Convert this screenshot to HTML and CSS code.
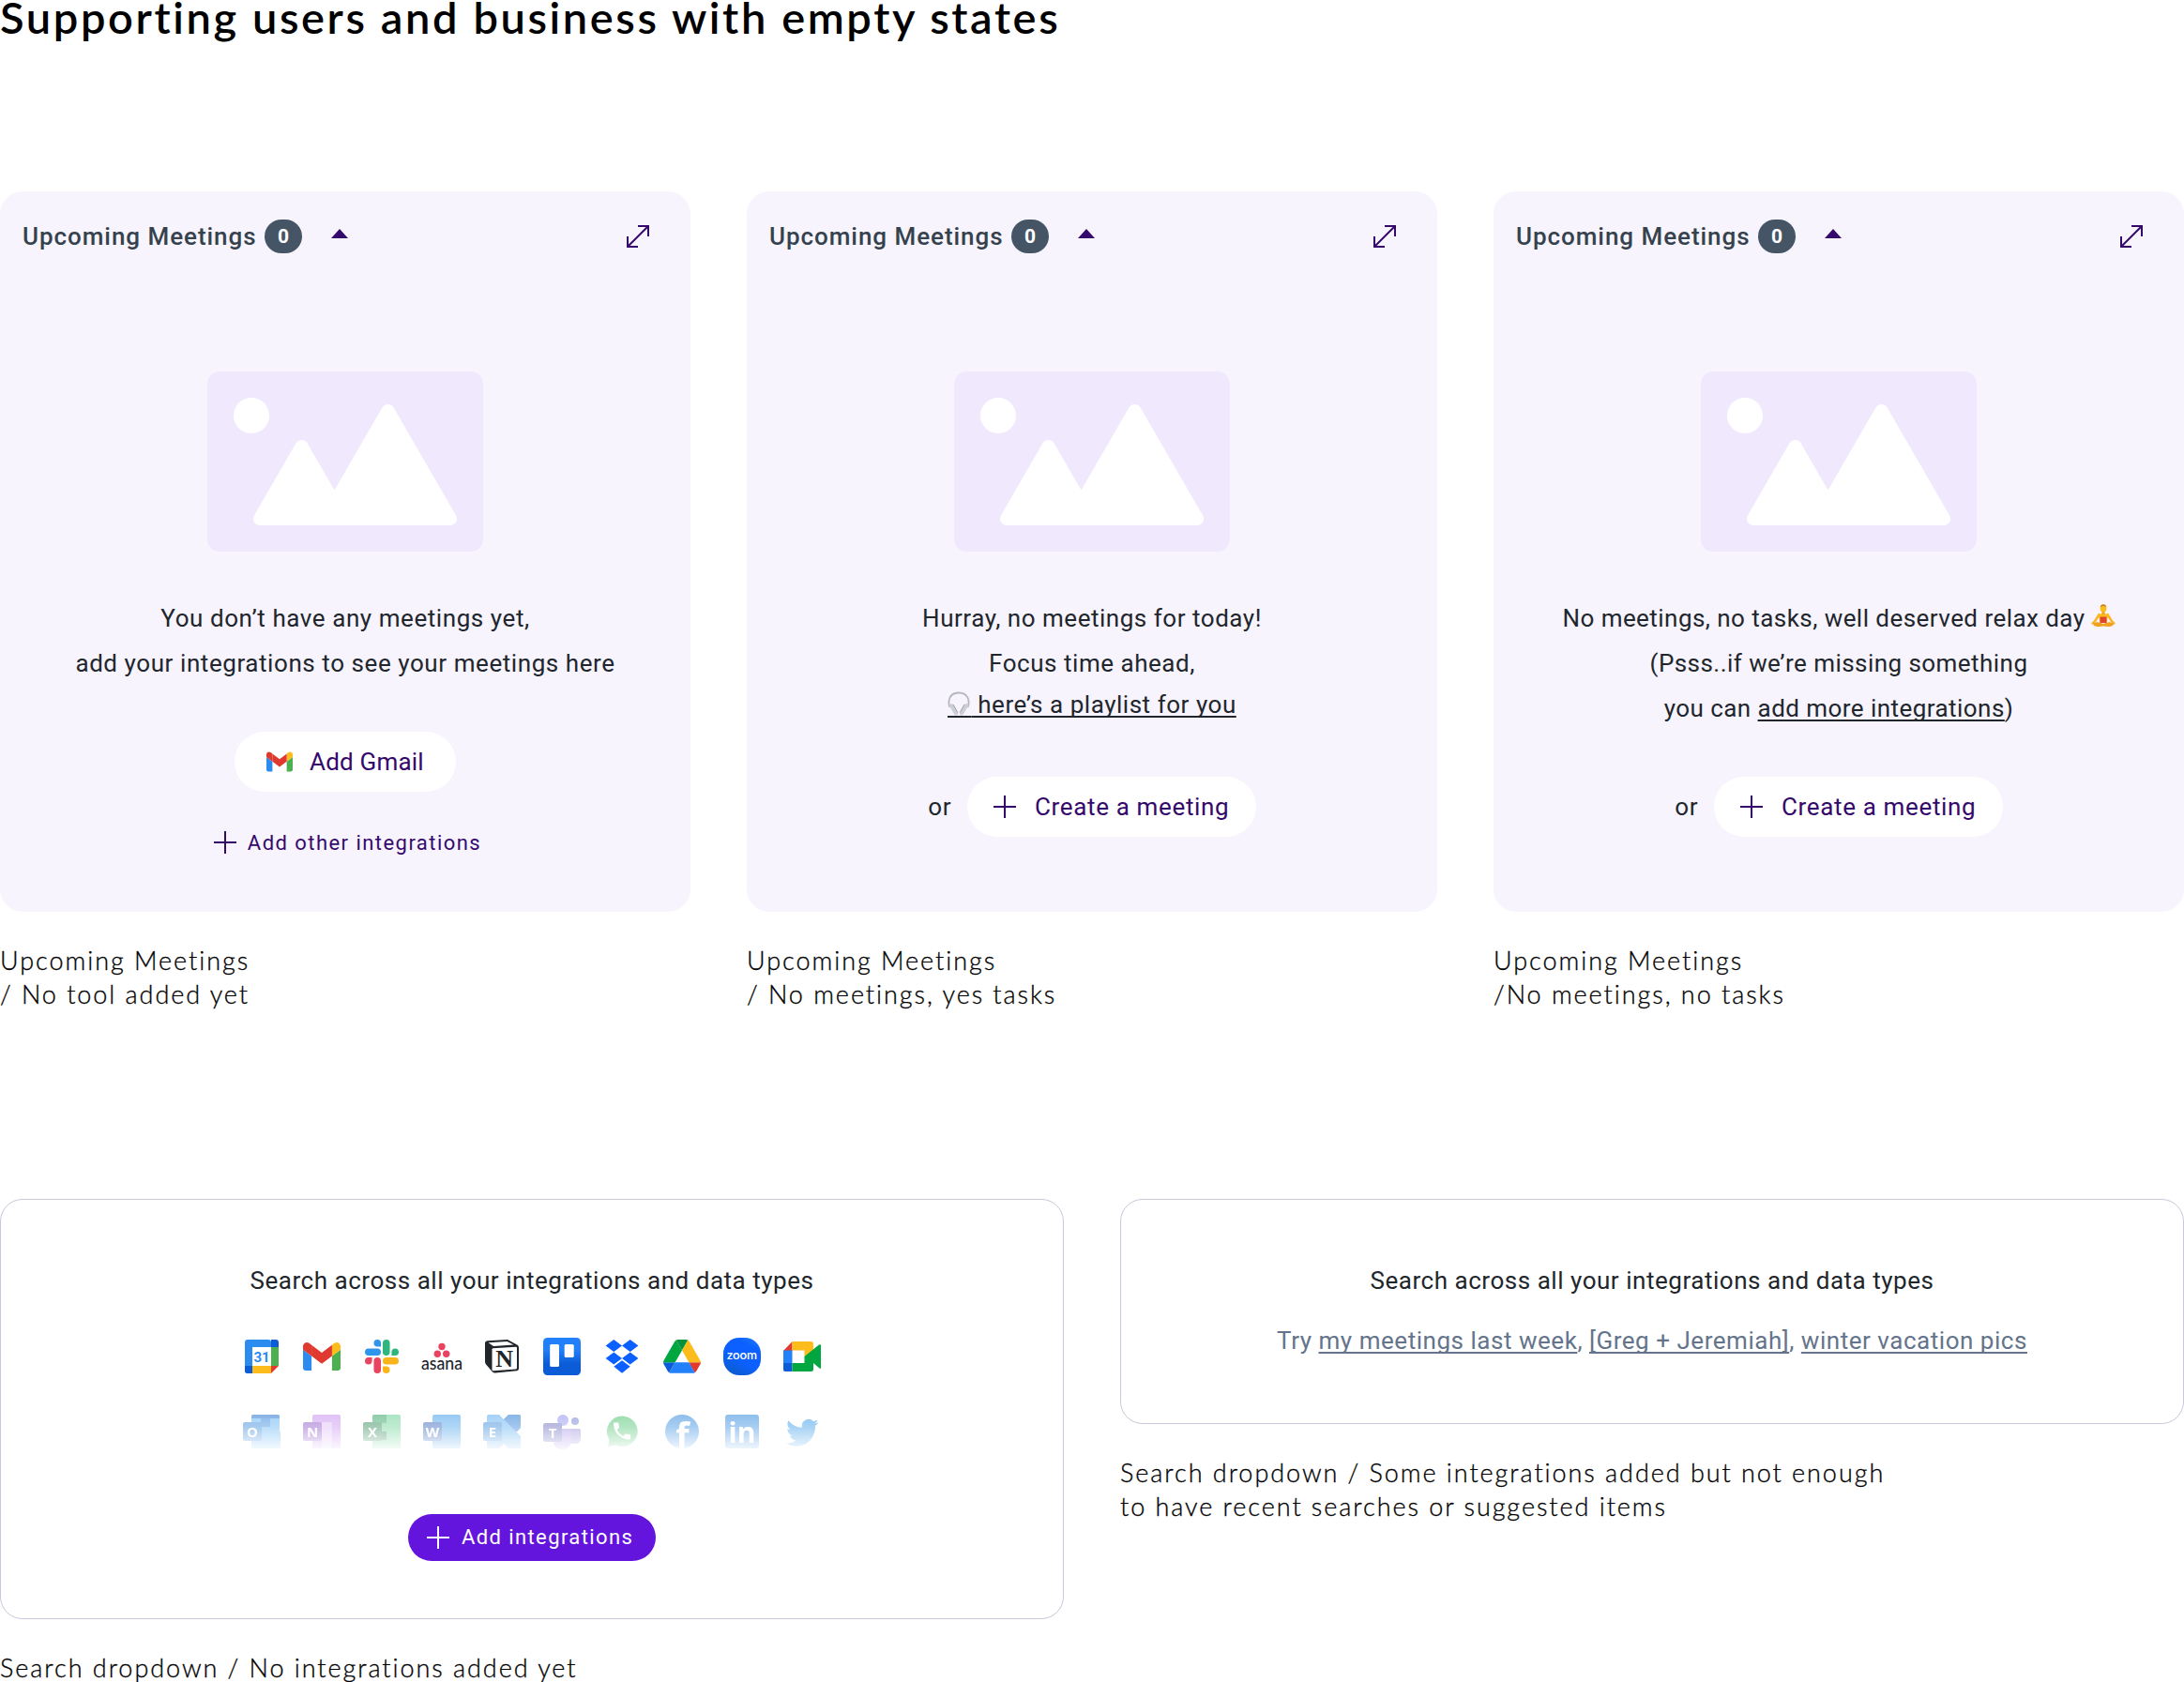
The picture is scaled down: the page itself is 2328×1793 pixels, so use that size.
FILE: index.html
```html
<!DOCTYPE html>
<html lang="en">
<head>
    <meta charset="UTF-8">
    <title>Empty states</title>
    <link rel="stylesheet" href="styles.css">
</head>
<body>
<!-- shared icons -->
<svg class="defs" width="0" height="0">
    <symbol id="expand" viewBox="0 0 24 24">
        <path d="M1 23L23 1M12 1h11v11M1 12v11h11" fill="none" stroke="#35096b" stroke-width="2"/>
    </symbol>
    <symbol id="plus" viewBox="0 0 24 24">
        <path d="M12 0v24M0 12h24" fill="none" stroke="currentColor" stroke-width="2"/>
    </symbol>
    <symbol id="picture" viewBox="0 0 294 192">
        <rect width="294" height="192" rx="13" fill="#f0e9fd"/>
        <circle cx="47" cy="47" r="19" fill="#fff"/>
        <path d="M56 157L100.500 80L135.500 140.500L192.500 42L259 157Z" fill="#fff" stroke="#fff" stroke-width="14" stroke-linejoin="round"/>
    </symbol>
    <symbol id="gmail" viewBox="52 42 88 66">
        <path fill="#2b8bee" d="M58 108h14V74L52 59v43c0 3.320 2.690 6 6 6"/>
        <path fill="#4caf50" d="M120 108h14c3.320 0 6-2.690 6-6V59l-20 15"/>
        <path fill="#fbbc1c" d="M120 48v26l20-15v-8c0-7.420-8.470-11.650-14.400-7.200"/>
        <path fill="#e03a30" d="M72 74V48l24 18 24-18v26L96 92"/>
        <path fill="#e03a30" d="M52 51v8l20 15V48l-5.600-4.200c-5.940-4.450-14.400-.220-14.400 7.200"/>
    </symbol>
    <linearGradient id="trelloFill" x1="0" y1="0" x2="0" y2="1">
        <stop offset="0.300" stop-color="#2380fb"/>
        <stop offset="0.700" stop-color="#0b5cd6"/>
    </linearGradient>
    <linearGradient id="zoomFill" x1="1" y1="0" x2="0.500" y2="1">
        <stop offset="0" stop-color="#2380fb"/>
        <stop offset="0.300" stop-color="#0b60ff"/>
        <stop offset="0.700" stop-color="#0b60ff"/>
        <stop offset="1" stop-color="#0b5cd6"/>
    </linearGradient>
</svg>

<h1 class="title">Supporting users and business with empty states</h1>

<div class="meetings">
    <div class="column">
        <div class="card">
            <div class="card-head">
                <span class="card-title">Upcoming Meetings</span>
                <span class="badge">0</span>
                <span class="arrow"></span>
                <svg class="expand"><use href="#expand"/></svg>
            </div>
            <svg class="picture"><use href="#picture"/></svg>
            <div class="message short">
                <p>You don’t have any meetings yet,</p>
                <p>add your integrations to see your meetings here</p>
            </div>
            <div class="pill gmail-pill">
                <svg class="gmail-icon"><use href="#gmail"/></svg>
                <span>Add Gmail</span>
            </div>
            <div class="other">
                <svg class="plus"><use href="#plus"/></svg>
                <span>Add other integrations</span>
            </div>
        </div>
        <p class="caption">Upcoming Meetings<br>/ No tool added yet</p>
    </div>

    <div class="column">
        <div class="card">
            <div class="card-head">
                <span class="card-title">Upcoming Meetings</span>
                <span class="badge">0</span>
                <span class="arrow"></span>
                <svg class="expand"><use href="#expand"/></svg>
            </div>
            <svg class="picture"><use href="#picture"/></svg>
            <div class="message">
                <p>Hurray, no meetings for today!</p>
                <p>Focus time ahead,</p>
                <p class="playlist"><a class="link"><svg class="headphones" viewBox="0 0 24 26">
                    <path d="M2.500 17C0 11 1.500 1.500 12 1.500S24 11 21.500 17" fill="none" stroke="#b4b7c0" stroke-width="1.800"/>
                    <path d="M4 15L9 23.500M20 15L15 23.500" fill="none" stroke="#cdcfd6" stroke-width="4" stroke-linecap="round"/>
                    <path d="M6 14L10.800 22.500M18 14L13.200 22.500" fill="none" stroke="#9a9da8" stroke-width="1"/>
                    <path d="M0 27h25" fill="none" stroke="#21262c" stroke-width="2"/>
                </svg> here’s a playlist for you</a></p>
            </div>
            <div class="actions">
                <span class="or">or</span>
                <div class="pill create-pill">
                    <svg class="plus"><use href="#plus"/></svg>
                    <span>Create a meeting</span>
                </div>
            </div>
        </div>
        <p class="caption">Upcoming Meetings<br>/ No meetings, yes tasks</p>
    </div>

    <div class="column">
        <div class="card">
            <div class="card-head">
                <span class="card-title">Upcoming Meetings</span>
                <span class="badge">0</span>
                <span class="arrow"></span>
                <svg class="expand"><use href="#expand"/></svg>
            </div>
            <svg class="picture"><use href="#picture"/></svg>
            <div class="message relax">
                <p>No meetings, no tasks, well deserved relax day<svg class="yoga" viewBox="0 0 26 25">
                    <path d="M8.500 11L4.500 17.500L1.500 20.500M17.500 11L21.500 17.500L24.500 20.500" fill="none" stroke="#f9b41e" stroke-width="2.400" stroke-linecap="round"/>
                    <path d="M2 20.500C7 18 10 20 13 21C16 20 19 18 24 20.500C24 24 19 24.500 13 23.500C7 24.500 2 24 2 20.500Z" fill="#f2a01f"/>
                    <path d="M8 11.500C9.500 9.500 16.500 9.500 18 11.500L17 19H9Z" fill="#fbbc1c"/>
                    <path d="M9.500 13.500h7v6.500h-7z" fill="#e0452f"/>
                    <rect x="11.500" y="6" width="3" height="5" fill="#f2a01f"/>
                    <ellipse cx="13" cy="4.500" rx="3.300" ry="4.300" fill="#fbbc1c"/>
                    <path d="M9.700 3.500C9.800-.700 16.200-.700 16.300 3.500C15 1.800 11 1.800 9.700 3.500Z" fill="#c98424"/>
                </svg></p>
                <p>(Psss..if we’re missing something</p>
                <p>you can <a class="link">add more integrations</a>)</p>
            </div>
            <div class="actions">
                <span class="or">or</span>
                <div class="pill create-pill">
                    <svg class="plus"><use href="#plus"/></svg>
                    <span>Create a meeting</span>
                </div>
            </div>
        </div>
        <p class="caption">Upcoming Meetings<br>/No meetings, no tasks</p>
    </div>
</div>

<div class="search">
    <div class="column">
        <div class="box tall">
            <p class="box-title">Search across all your integrations and data types</p>
            <div class="icons">
                <!-- calendar -->
                <svg viewBox="0 0 40 40">
                    <rect x="2" y="2" width="28" height="36" rx="3" fill="#2b8bee"/>
                    <path d="M30 2h5a3 3 0 0 1 3 3v5h-8zM2 30h8v8H5a3 3 0 0 1-3-3z" fill="#0b5cd6"/>
                    <path d="M30 10h8v20h-8z" fill="#4caf50"/>
                    <path d="M10 30h20v8H10z" fill="#fbbc1c"/>
                    <path d="M30 30h8l-8 8z" fill="#e03a30"/>
                    <path d="M10 10h20v20H10z" fill="#fff"/>
                    <text x="20" y="25.500" class="t-31">31</text>
                </svg>
                <!-- gmail -->
                <svg viewBox="0 0 40 40"><use href="#gmail" x="0" y="4" width="40" height="32"/></svg>
                <!-- slack -->
                <svg viewBox="0 0 40 40">
                    <g transform="translate(2 2) scale(1.500)">
                        <path fill="#e8435f" d="M5.042 15.165a2.528 2.528 0 0 1-2.520 2.523A2.528 2.528 0 0 1 0 15.165a2.527 2.527 0 0 1 2.522-2.520h2.520v2.520zM6.313 15.165a2.527 2.527 0 0 1 2.521-2.520 2.527 2.527 0 0 1 2.521 2.520v6.313A2.528 2.528 0 0 1 8.834 24a2.528 2.528 0 0 1-2.521-2.522v-6.313z"/>
                        <path fill="#2f95ea" d="M8.834 5.042a2.528 2.528 0 0 1-2.521-2.520A2.528 2.528 0 0 1 8.834 0a2.528 2.528 0 0 1 2.521 2.522v2.520H8.834zM8.834 6.313a2.528 2.528 0 0 1 2.521 2.521 2.528 2.528 0 0 1-2.521 2.521H2.522A2.528 2.528 0 0 1 0 8.834a2.528 2.528 0 0 1 2.522-2.521h6.312z"/>
                        <path fill="#2fb67c" d="M18.956 8.834a2.528 2.528 0 0 1 2.522-2.521A2.528 2.528 0 0 1 24 8.834a2.528 2.528 0 0 1-2.522 2.521h-2.522V8.834zM17.688 8.834a2.528 2.528 0 0 1-2.523 2.521 2.527 2.527 0 0 1-2.520-2.521V2.522A2.527 2.527 0 0 1 15.165 0a2.528 2.528 0 0 1 2.523 2.522v6.312z"/>
                        <path fill="#fbb51c" d="M15.165 18.956a2.528 2.528 0 0 1 2.523 2.522A2.528 2.528 0 0 1 15.165 24a2.527 2.527 0 0 1-2.520-2.522v-2.522h2.520zM15.165 17.688a2.527 2.527 0 0 1-2.520-2.523 2.526 2.526 0 0 1 2.520-2.520h6.313A2.527 2.527 0 0 1 24 15.165a2.528 2.528 0 0 1-2.522 2.523h-6.313z"/>
                    </g>
                </svg>
                <!-- asana -->
                <svg viewBox="0 0 40 40">
                    <circle cx="20" cy="9.500" r="3.700" fill="#e8435f"/>
                    <circle cx="15.300" cy="17.300" r="3.700" fill="#e8435f"/>
                    <circle cx="24.700" cy="17.300" r="3.700" fill="#e8435f"/>
                    <text x="-2" y="33.700" class="t-asana" textLength="44" lengthAdjust="spacingAndGlyphs">asana</text>
                </svg>
                <!-- notion -->
                <svg viewBox="0 0 40 40">
                    <path d="M2 5.500Q2 3.500 4.500 3.300L26 2L37 8Q38 9 38 11V33Q38 35 36 35.300L13 37.500Q11 37.700 10 36.500L3.500 29Q2 27.500 2 25.500Z" fill="#21262c"/>
                    <path d="M5.500 5.300L25.500 4L32.500 7.600L11 9Z" fill="#fff"/>
                    <path d="M9.500 12.500Q9.500 11.300 11 11.200L35 9.700Q36 9.700 36 11V32Q36 33.300 35 33.500L11 35.200Q9.500 35.300 9.500 34Z" fill="#fff"/>
                    <text x="22.700" y="31.300" class="t-notion">N</text>
                </svg>
                <!-- trello -->
                <svg viewBox="0 0 40 40">
                    <rect width="40" height="40" rx="4.500" fill="url(#trelloFill)"/>
                    <rect x="7.200" y="7" width="9.800" height="24" rx="1.500" fill="#fff"/>
                    <rect x="22.700" y="7" width="10" height="14" rx="1.500" fill="#fff"/>
                </svg>
                <!-- dropbox -->
                <svg viewBox="0 0 40 40">
                    <path fill="#0b60ff" d="M11.300 2l8.700 6.500-8.700 6.500-8.700-6.500zM28.700 2l8.700 6.500-8.700 6.500-8.700-6.500zM11.300 15.500l8.700 6.500-8.700 6.500-8.700-6.500zM28.700 15.500l8.700 6.500-8.700 6.500-8.700-6.500zM20 24.200l8.700 6.500-8.700 7-8.700-7z"/>
                </svg>
                <!-- drive -->
                <svg viewBox="0 0 40 40">
                    <g transform="translate(0 2) scale(0.458)">
                        <path fill="#0b5cd6" d="m6.600 66.850 3.850 6.650c.800 1.400 1.950 2.500 3.300 3.300l13.750-23.800h-27.500c0 1.550.400 3.100 1.200 4.500z"/>
                        <path fill="#00a63f" d="m43.650 25-13.750-23.800c-1.350.800-2.500 1.900-3.300 3.300l-25.400 44a9.060 9.060 0 0 0 -1.200 4.500h27.500z"/>
                        <path fill="#e03a30" d="m73.550 76.800c1.350-.800 2.500-1.900 3.300-3.300l1.600-2.750 7.650-13.250c.800-1.400 1.200-2.950 1.200-4.500h-27.502l5.852 11.500z"/>
                        <path fill="#05923a" d="m43.650 25 13.750-23.800c-1.350-.800-2.900-1.200-4.500-1.200h-18.500c-1.600 0-3.150.450-4.500 1.200z"/>
                        <path fill="#2380fb" d="m59.800 53h-32.300l-13.750 23.800c1.350.800 2.900 1.200 4.500 1.200h50.800c1.600 0 3.150-.450 4.500-1.200z"/>
                        <path fill="#fbbc1c" d="m73.400 26.500-12.700-22c-.800-1.400-1.950-2.500-3.300-3.300l-13.750 23.800 16.150 28h27.450c0-1.550-.400-3.100-1.200-4.500z"/>
                    </g>
                </svg>
                <!-- zoom -->
                <svg viewBox="0 0 40 40">
                    <rect width="40" height="40" rx="17" fill="url(#zoomFill)"/>
                    <text x="4" y="23.300" class="t-zoom" textLength="32" lengthAdjust="spacingAndGlyphs">zoom</text>
                </svg>
                <!-- meet -->
                <svg viewBox="0 0 40 40">
                    <path d="M0 14L9.500 4V14Z" fill="#e03a30"/>
                    <path d="M9.500 4H29.500Q32 4 32 6.500V20H22.500V13.500H9.500Z" fill="#fbbc1c"/>
                    <path d="M0 13.500H9.500V27H0Z" fill="#2380fb"/>
                    <path d="M0 27H9.500V36H2Q0 36 0 34Z" fill="#0b5cd6"/>
                    <path d="M9.500 27H22.500V20L38 7.500Q40 6.500 40 8.500V32Q40 33.500 38.500 32.500L32 27V33.500Q32 36 29.500 36H9.500Z" fill="#00a63f"/>
                </svg>
            </div>
            <div class="icons faded">
                <!-- outlook -->
                <svg viewBox="0 0 40 40">
                    <path d="M9 4Q9 2 11 2H37Q39 2 39 4V20L40 21V36Q40 38 38 38H11Q9 38 9 36Z" fill="#58aef2"/>
                    <path d="M9 4Q9 2 11 2H37Q39 2 39 4V6H9Z" fill="#1f6fce"/>
                    <path d="M19 6h10v9H19z" fill="#2a80d8"/>
                    <rect y="10" width="20" height="20" rx="2" fill="#2a80d8"/>
                    <text x="10" y="25.500" class="t-badge">O</text>
                </svg>
                <!-- onenote -->
                <svg viewBox="0 0 40 40">
                    <rect x="10" y="2" width="30" height="36" rx="2" fill="#c58bf0"/>
                    <path d="M20 10h11v28H20z" fill="#dbb8f6"/>
                    <rect y="10" width="20" height="20" rx="2" fill="#8446c4"/>
                    <text x="10" y="25.500" class="t-badge">N</text>
                </svg>
                <!-- excel -->
                <svg viewBox="0 0 40 40">
                    <rect x="10" y="2" width="30" height="36" rx="2" fill="#63cf8d"/>
                    <path d="M12 2H25V11H10V4Q10 2 12 2Z" fill="#2ba060"/>
                    <path d="M10 20h15v9H10z" fill="#1f7a48"/>
                    <rect y="10" width="20" height="20" rx="2" fill="#23804b"/>
                    <text x="10" y="25.500" class="t-badge">X</text>
                </svg>
                <!-- word -->
                <svg viewBox="0 0 40 40">
                    <rect x="10" y="2" width="30" height="36" rx="2" fill="#3c9be8"/>
                    <rect y="10" width="20" height="20" rx="2" fill="#2458b4"/>
                    <text x="10" y="25.500" class="t-badge">W</text>
                </svg>
                <!-- exchange -->
                <svg viewBox="0 0 40 40">
                    <path d="M4 4Q4 2 6 2H17L22 7L27 2H38Q40 2 40 4V16L35.500 20.500L40 25V36Q40 38 38 38H27L22 33L17 38H6Q4 38 4 36Z" fill="#56aaf0"/>
                    <path d="M22 7L27 2H38Q40 2 40 4V16L35.500 20.500Z" fill="#1f76d2"/>
                    <rect y="10" width="20" height="20" rx="2" fill="#2a80d8"/>
                    <text x="10" y="25.500" class="t-badge">E</text>
                </svg>
                <!-- teams -->
                <svg viewBox="0 0 40 40">
                    <circle cx="21" cy="8" r="6" fill="#8f8cf0"/>
                    <circle cx="34" cy="9" r="4" fill="#6a78cc"/>
                    <path d="M28 17H38.500Q40 17 40 18.500V27Q40 33 34 33H28Z" fill="#8a7fd6"/>
                    <path d="M11 17H30V28Q30 39 20.500 39Q11 39 11 30Z" fill="#9c84e6"/>
                    <rect y="11" width="20" height="20" rx="2" fill="#5b5fb8"/>
                    <text x="10" y="26.500" class="t-badge">T</text>
                </svg>
                <!-- whatsapp -->
                <svg viewBox="0 0 40 40">
                    <path d="M20.500 3.500A16.500 16.300 0 1 1 13 34.500L5 36.500L6.300 28.500A16.500 16.500 0 0 1 20.500 3.500Z" fill="#45bf67"/>
                    <path transform="translate(8 7.500)" d="M6.620 10.790c1.440 2.830 3.760 5.140 6.590 6.590l2.200-2.200c.270-.270.670-.360 1.020-.240 1.120.370 2.330.570 3.570.570.550 0 1 .450 1 1V20c0 .550-.450 1-1 1-9.390 0-17-7.610-17-17 0-.550.450-1 1-1h3.500c.550 0 1 .450 1 1 0 1.250.200 2.450.570 3.570.110.350.030.740-.250 1.020l-2.200 2.200z" fill="#fff"/>
                </svg>
                <!-- facebook -->
                <svg viewBox="0 0 40 40">
                    <circle cx="20" cy="20" r="18" fill="#2a86dd"/>
                    <text x="20.500" y="38" class="t-facebook">f</text>
                </svg>
                <!-- linkedin -->
                <svg viewBox="0 0 40 40">
                    <rect x="2" y="2" width="36" height="36" rx="3" fill="#2a86dd"/>
                    <text x="20" y="32" class="t-linkedin">in</text>
                </svg>
                <!-- twitter -->
                <svg viewBox="0 0 40 40">
                    <path transform="translate(3 3.500) scale(1.440 1.480)" fill="#2a93e6" d="M23.953 4.570a10 10 0 01-2.825.775 4.958 4.958 0 002.163-2.723c-.951.555-2.005.959-3.127 1.184a4.920 4.920 0 00-8.384 4.482C7.690 8.095 4.067 6.130 1.640 3.162a4.822 4.822 0 00-.666 2.475c0 1.710.870 3.213 2.188 4.096a4.904 4.904 0 01-2.228-.616v.060a4.923 4.923 0 003.946 4.827 4.996 4.996 0 01-2.212.085 4.936 4.936 0 004.604 3.417 9.867 9.867 0 01-6.102 2.105c-.390 0-.779-.023-1.170-.067a13.995 13.995 0 007.557 2.209c9.053 0 13.998-7.496 13.998-13.985 0-.210 0-.420-.015-.630A9.935 9.935 0 0024 4.590z"/>
                </svg>
            </div>
            <div class="add-btn">
                <svg class="plus"><use href="#plus"/></svg>
                <span>Add integrations</span>
            </div>
        </div>
        <p class="caption">Search dropdown / No integrations added yet</p>
    </div>

    <div class="column">
        <div class="box">
            <p class="box-title">Search across all your integrations and data types</p>
            <p class="try">Try <a class="link">my meetings last week</a>, <a class="link">[Greg + Jeremiah]</a>, <a class="link">winter vacation pics</a></p>
        </div>
        <p class="caption">Search dropdown / Some integrations added but not enough<br>to have recent searches or suggested items</p>
    </div>
</div>
</body>
</html>
```
FILE: styles.css
```css
* {
    padding: 0;
    margin: 0;
    box-sizing: border-box;
}

body {
    width: 2328px;
    height: 1793px;
    overflow: hidden;
    background: #fff;
    font-family: Roboto, sans-serif;
    font-size: 26px;
    letter-spacing: 0.53px;
    color: #21262c;
}

svg {
    display: block;
    overflow: visible;
}

.defs {
    position: absolute;
}

.title {
    font-family: Lato, sans-serif;
    font-size: 47px;
    font-weight: 600;
    line-height: 37px;
    letter-spacing: 2.6px;
    white-space: nowrap;
    color: #000;
}

/* meeting cards */
.meetings {
    display: grid;
    grid-template-columns: repeat(3, 736px);
    gap: 60px;
    margin-top: 167px;
}

.card {
    height: 768px;
    padding: 30px 24px 0;
    border-radius: 24px;
    background: #f7f4fe;
    display: flex;
    flex-direction: column;
    align-items: center;
}

.card-head {
    width: 100%;
    height: 36px;
    display: flex;
    align-items: center;
}

.card-title {
    width: 258px;
    font-weight: 500;
    letter-spacing: 0.95px;
    white-space: nowrap;
    color: #35424d;
}

.badge {
    width: 40px;
    height: 36px;
    border-radius: 18px;
    background: #455565;
    color: #fff;
    font-size: 21px;
    font-weight: 700;
    line-height: 36px;
    letter-spacing: 0;
    text-align: center;
}

.arrow {
    margin: 0 0 6px 31px;
    border: 9px solid transparent;
    border-top: 0;
    border-bottom: 10px solid #35096b;
}

.expand {
    width: 24px;
    height: 24px;
    margin: 0 20px 0 auto;
}

.picture {
    width: 294px;
    height: 192px;
    margin-top: 126px;
    flex-shrink: 0;
}

.message {
    height: 193px;
    margin-top: 47px;
    line-height: 48px;
    text-align: center;
    white-space: nowrap;
}

.message.short {
    height: 145px;
    letter-spacing: 0.57px;
}

.message.relax {
    letter-spacing: 0.45px;
}

.message .playlist {
    line-height: 40px;
}

.headphones {
    display: inline-block;
    width: 24px;
    height: 26px;
    margin-right: 1px;
    vertical-align: -3px;
}

.yoga {
    display: inline-block;
    width: 26px;
    height: 25px;
    margin-left: 6px;
    vertical-align: -1px;
}

.link {
    text-decoration: underline;
    text-decoration-thickness: 2px;
    text-underline-offset: 3px;
    text-decoration-skip-ink: none;
}

.pill {
    height: 64px;
    border-radius: 32px;
    background: #fff;
    color: #35096b;
    display: flex;
    align-items: center;
    white-space: nowrap;
}

.gmail-pill {
    width: 236px;
    padding-left: 34px;
    gap: 18px;
    letter-spacing: 0.2px;
}

.gmail-icon {
    width: 28px;
    height: 22px;
}

.create-pill {
    width: 308px;
    padding-left: 28px;
    gap: 20px;
    letter-spacing: 0.65px;
}

.plus {
    width: 24px;
    height: 24px;
}

.actions {
    display: flex;
    align-items: center;
    align-self: flex-end;
    gap: 17px;
    margin-right: 169px;
}

.other {
    display: flex;
    align-items: center;
    gap: 12px;
    height: 24px;
    margin: 42px 0 0 5px;
    font-size: 22px;
    letter-spacing: 1.45px;
    color: #35096b;
}

.caption {
    margin-top: 34px;
    font-family: Lato, sans-serif;
    font-size: 27px;
    font-weight: 300;
    line-height: 36px;
    letter-spacing: 1.95px;
    white-space: nowrap;
    color: #000;
    -webkit-text-stroke: 0.3px #000;
}

/* search dropdowns */
.search {
    display: grid;
    grid-template-columns: repeat(2, 1134px);
    gap: 60px;
    margin-top: 200px;
}

.box {
    height: 240px;
    padding-top: 62px;
    border: 1px solid #c8c8da;
    border-radius: 24px;
    display: flex;
    flex-direction: column;
    align-items: center;
    line-height: 48px;
}

.box.tall {
    height: 448px;
}

.try {
    margin-top: 16px;
    color: #64748b;
}

.icons {
    display: flex;
    gap: 24px;
    margin-top: 37px;
}

.icons svg {
    width: 40px;
    height: 40px;
}

.icons.faded {
    margin-top: 40px;
    -webkit-mask-image: linear-gradient(rgba(0, 0, 0, 0.55), rgba(0, 0, 0, 0.4) 40%, rgba(0, 0, 0, 0.08) 95%);
    mask-image: linear-gradient(rgba(0, 0, 0, 0.55), rgba(0, 0, 0, 0.4) 40%, rgba(0, 0, 0, 0.08) 95%);
}

.icons text {
    letter-spacing: 0;
    text-anchor: middle;
}

.icons .t-31 {
    font-size: 15px;
    font-weight: 700;
    fill: #2b8bee;
}

.icons .t-asana {
    font-family: Lato, sans-serif;
    font-size: 19px;
    font-weight: 500;
    text-anchor: start;
    fill: #21262c;
}

.icons .t-notion {
    font-family: "Liberation Serif", serif;
    font-size: 26px;
    font-weight: 700;
    fill: #21262c;
}

.icons .t-zoom {
    font-family: Lato, sans-serif;
    font-size: 14px;
    font-weight: 600;
    text-anchor: start;
    fill: #fff;
}

.icons .t-badge {
    font-family: "Open Sans", sans-serif;
    font-size: 15px;
    font-weight: 700;
    fill: #fff;
}

.icons .t-facebook {
    font-family: "Open Sans", sans-serif;
    font-size: 37px;
    font-weight: 700;
    fill: #fff;
}

.icons .t-linkedin {
    font-family: "Open Sans", sans-serif;
    font-size: 30px;
    font-weight: 700;
    fill: #fff;
}

.add-btn {
    width: 264px;
    height: 50px;
    margin-top: 68px;
    padding-left: 20px;
    border-radius: 25px;
    background: #6415dd;
    color: #fff;
    font-size: 22px;
    letter-spacing: 1.4px;
    display: flex;
    align-items: center;
    gap: 13px;
}
```
